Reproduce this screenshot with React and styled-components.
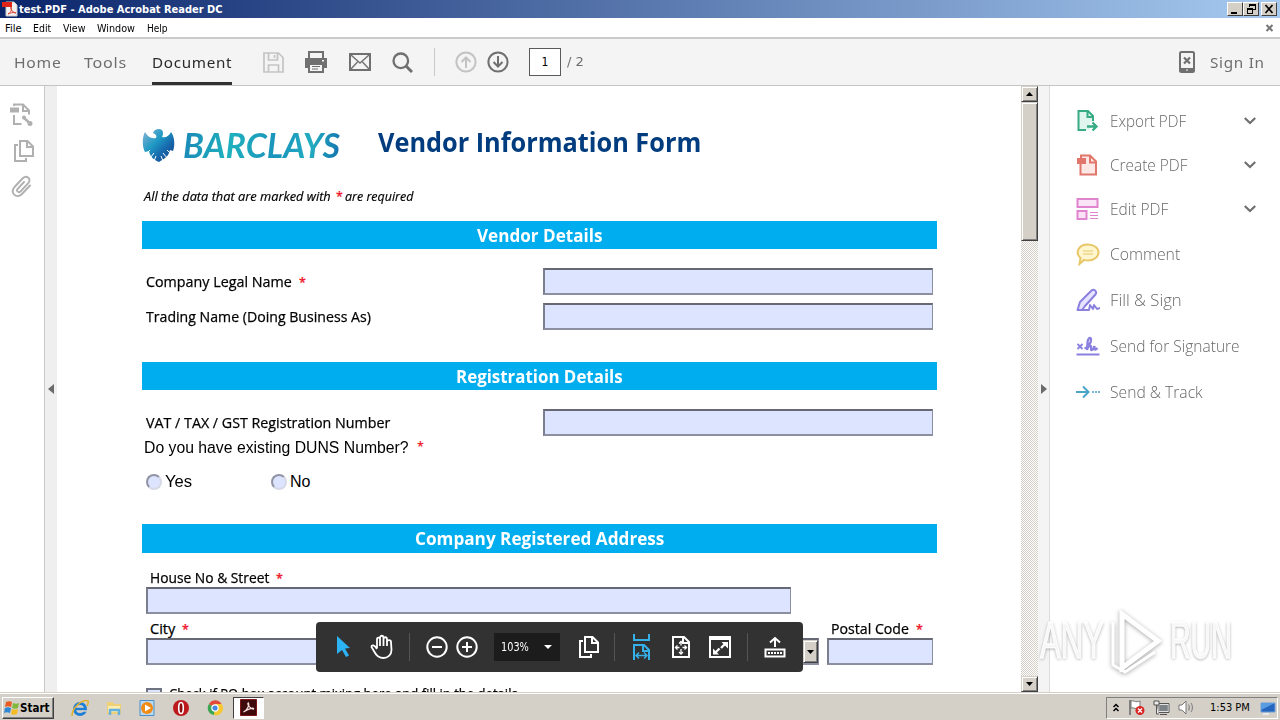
import React, { useLayoutEffect, useRef, useState } from 'react';
import styled, { createGlobalStyle, css } from 'styled-components';

const GlobalStyle = createGlobalStyle`
  * {
    box-sizing: border-box;
  }

  body {
    margin: 0;
    background: #fff;
    overflow: hidden;
  }
`;

const systemFont = '"DejaVu Sans Condensed", "DejaVu Sans", sans-serif';
const toolFont = '"Noto Sans", "Open Sans", sans-serif';
const pageFont = '"Open Sans", "Noto Sans", sans-serif';
const arial = '"Liberation Sans", Arial, sans-serif';

/* ---------- text set to a fixed measure ---------- */

const Measure = styled.span`
  display: inline-block;
  flex: none;
  width: ${props => props.$width}px;
  white-space: nowrap;
`;

const Glyphs = styled.span`
  display: inline-block;
  transform-origin: 0 50%;
`;

const Fit = ({ width, children }) => {
  const ref = useRef(null);
  const [scale, setScale] = useState(1);

  useLayoutEffect(() => {
    setScale(width / ref.current.offsetWidth);
  }, [width, children]);

  return (
    <Measure $width={width}>
      <Glyphs ref={ref} style={{ transform: `scaleX(${scale})` }}>{children}</Glyphs>
    </Measure>
  );
};

/* ---------- window chrome ---------- */

const Window = styled.div`
  position: relative;
  display: flex;
  flex-direction: column;
  width: 1280px;
  height: 720px;
  overflow: hidden;
  background: #fff;
`;

const TitleBar = styled.header`
  display: flex;
  align-items: center;
  flex: none;
  height: 18px;
  padding: 0 3px 0 2px;
  background: linear-gradient(90deg, #0a246a, #a6caf0);
  color: #fff;
  font: bold 11px/16px ${systemFont};
`;

const WindowTitle = styled.div`
  flex: 1;
  padding: 1px 0 0 1px;
`;

const WindowButton = styled.button`
  display: flex;
  width: 16px;
  height: 14px;
  margin-left: ${props => props.$gap || 0}px;
  padding: 0;
  border: 1px solid;
  border-color: #fff #404040 #404040 #fff;
  background: #d4d0c8;
`;

const MenuBar = styled.nav`
  display: flex;
  align-items: center;
  flex: none;
  height: 21px;
  padding: 2px 6px 0 5px;
  border-bottom: 2px solid #cbcbcb;
  background: #fff;
  color: #000;
  font: 11px/16px ${systemFont};
`;

const MenuItem = styled.span`
  margin-right: ${props => props.$gap}px;
`;

const MenuClose = styled.span`
  display: flex;
  margin: -2px 0 0 auto;
`;

const Toolbar = styled.div`
  display: flex;
  flex: none;
  height: 47px;
  padding-left: 14px;
  border-bottom: 1px solid #c4c4c4;
  background: #f4f4f4;
`;

const Tab = styled.div`
  display: flex;
  align-items: center;
  height: 46px;
  margin-right: ${props => props.$gap}px;
  padding-top: ${props => (props.$active ? 3 : 0)}px;
  border-bottom: ${props => (props.$active ? '3px solid #323232' : '0')};
  color: ${props => (props.$active ? '#2a2a2a' : '#6e6e6e')};
  font: 15px/24px ${toolFont};
  letter-spacing: 0.7px;
`;

const ToolSlot = styled.div`
  display: flex;
  align-items: center;
  height: 46px;
  margin-right: ${props => props.$gap}px;
`;

const ToolDivider = styled.div`
  width: 1px;
  height: 28px;
  background: #cacaca;
`;

const PageBox = styled.div`
  width: 32px;
  height: 28px;
  border: 1px solid #5a5a5a;
  background: #fff;
  color: #000;
  font: 12px/26px ${systemFont};
  text-align: center;
`;

const PageTotal = styled.span`
  color: #6e6e6e;
  font: 12px/24px ${systemFont};
`;

const SignIn = styled.div`
  display: flex;
  align-items: center;
  gap: 15px;
  height: 46px;
  margin-left: auto;
  padding-right: 15px;
  color: #6e6e6e;
  font: 15px/24px ${toolFont};
  letter-spacing: 0.7px;
`;

/* ---------- body columns ---------- */

const Body = styled.div`
  display: flex;
  flex: none;
  height: 606px;
`;

const Rail = styled.aside`
  width: 45px;
  padding: 16px 0 0 10px;
  border-right: 1px solid #c8c8c8;

  svg {
    display: block;
  }
`;

const RailIcon = styled.div`
  height: ${props => props.$height}px;
`;

const Gutter = styled.div`
  display: flex;
  align-items: center;
  justify-content: center;
  width: ${props => props.$width}px;
  background: ${props => props.$tone};
`;

const ScrollBar = styled.div`
  display: flex;
  flex-direction: column;
  width: 17px;
  height: 606px;
  background: repeating-conic-gradient(#d4d0c8 0 25%, #fff 0 50%) 0 0 / 2px 2px;
`;

const raised = css`
  border: 1px solid;
  border-color: #d4d0c8 #404040 #404040 #d4d0c8;
  box-shadow: inset 1px 1px 0 #fff, inset -1px -1px 0 #808080;
  background: #d4d0c8;
`;

const ScrollArrow = styled.div`
  ${raised}
  display: flex;
  align-items: center;
  justify-content: center;
  height: 16px;
`;

const ScrollThumb = styled.div`
  ${raised}
  height: 139px;
  margin-bottom: auto;
`;

/* ---------- document page ---------- */

const Page = styled.main`
  width: 964px;
  height: 606px;
  padding: 0 84px 0 85px;
  overflow: hidden;
  background: #fff;
  color: #000;
  font: 14.5px/20px ${pageFont};
`;

const PageHead = styled.div`
  height: 135px;
  padding-top: 41px;
`;

const Brand = styled.div`
  display: flex;
  align-items: center;
  height: 38px;
`;

const BrandName = styled.div`
  margin: -2px 38px 0 8px;
  font: italic 700 34px/38px Lato, sans-serif;

  ${Glyphs} {
    background: linear-gradient(100deg, #1a86b8, #1fb0bd 30%, #1a93bd 60%, #22adc0 80%, #1470ae);
    background-clip: text;
    -webkit-background-clip: text;
    color: transparent;
  }
`;

const PageTitle = styled.h1`
  margin: -8px 0 0;
  color: #003c7e;
  font: bold 26px/36px ${pageFont};
`;

const Note = styled.div`
  display: flex;
  padding: 21px 0 0 2px;
  font: italic 13px/20px ${pageFont};
  -webkit-text-stroke: 0.2px;
`;

const Star = styled.span`
  width: 6px;
  margin: 0 ${props => props.$after || 0}px 0 ${props => props.$before || 7}px;
  color: #ed1c2e;
  font: 600 12.5px/21px ${pageFont};
`;

const SectionBar = styled.h2`
  height: ${props => props.$height || 28}px;
  margin: 0;
  background: #00aeef;
  color: #fff;
  font: bold 17.5px/28px ${pageFont};
  text-align: center;
`;

const Section = styled.section`
  height: ${props => props.$height}px;
  padding: ${props => props.$top}px 4px 0;
`;

const FormRow = styled.div`
  display: flex;
  align-items: center;
  justify-content: space-between;
  height: 27px;
  margin-bottom: ${props => props.$below || 0}px;
`;

const Label = styled.label`
  display: flex;
  height: 20px;
  -webkit-text-stroke: 0.25px;
`;

const Field = styled.div`
  flex: none;
  width: ${props => props.$width}px;
  height: 27px;
  border: 2px solid;
  border-color: #666874 #8b8f9f #8b8f9f #7b7e8c;
  border-right-width: 1px;
  background: #dde4ff;
`;

const Question = styled.div`
  display: flex;
  height: 24px;
  margin-left: -2px;
  font: 16px/23px ${arial};
`;

const RadioRow = styled.div`
  display: flex;
  align-items: center;
  height: 24px;
  margin-top: 10px;
  font: 16px/24px ${arial};
`;

const Radio = styled.span`
  width: 16px;
  height: 16px;
  margin: 0 3px 0 ${props => props.$before || 0}px;
  border: 2px solid;
  border-color: #9194a4 #d6d9e6 #d6d9e6 #9194a4;
  border-radius: 50%;
  background: #dde4ff;
`;

const LabelLine = styled.div`
  display: flex;
  height: ${props => props.$height}px;
  padding: 1px 0 0 4px;
`;

const CityLabels = styled.div`
  display: flex;
  justify-content: space-between;
  width: 772px;
  padding-top: 4px;
`;

const FieldLine = styled.div`
  display: flex;
  gap: 8px;
`;

const SelectField = styled(Field)`
  display: flex;
  justify-content: flex-end;
`;

const SelectArrow = styled.div`
  ${raised}
  display: flex;
  align-items: center;
  justify-content: center;
  width: 15px;
`;

const CheckLine = styled.div`
  display: flex;
  gap: 7px;
  padding-top: 23px;
  -webkit-text-stroke: 0.25px;
`;

const CheckBox = styled.span`
  width: 16px;
  height: 16px;
  border: 2px solid #6f7280;
  background: #dde4ff;
`;

const CheckText = styled.span`
  margin-top: -4px;
`;

/* ---------- tools pane ---------- */

const Pane = styled.aside`
  width: 231px;
  padding: 13px 24px 0 26px;
  border-left: 1px solid #dcdcdc;
  background: #fff;
  color: #686868;
  font: 300 16px/24px "Open Sans", "Noto Sans", sans-serif;
`;

const PaneItem = styled.div`
  display: flex;
  align-items: center;
  height: ${props => props.$height}px;

  > svg:first-child {
    margin-right: 10px;
  }

  > svg:last-child {
    margin-left: auto;
  }
`;

/* ---------- floating page controls ---------- */

const Controls = styled.div`
  position: absolute;
  left: 316px;
  top: 622px;
  display: flex;
  align-items: center;
  width: 487px;
  height: 50px;
  padding-left: 18px;
  border-radius: 4px;
  background: #323232;
`;

const ControlIcon = styled.div`
  display: flex;
  flex: none;
  margin-right: ${props => props.$after}px;
`;

const ControlDivider = styled.div`
  width: 1px;
  height: 28px;
  margin-right: ${props => props.$after}px;
  background: #555;
`;

const ZoomBox = styled.div`
  display: flex;
  align-items: center;
  justify-content: space-between;
  width: 66px;
  height: 28px;
  margin-right: 18px;
  padding: 0 8px 0 7px;
  background: #1c1c1c;
  color: #fff;
  font: 12px/26px ${systemFont};
`;

/* ---------- watermark ---------- */

const Watermark = styled.div`
  position: absolute;
  left: 1040px;
  top: 606px;
  display: flex;
  align-items: center;
  height: 70px;
  color: rgba(255, 255, 255, 0.9);
  font: 51px/70px ${arial};
  -webkit-text-stroke: 1.5px rgba(255, 255, 255, 0.9);
  text-shadow: 0 1px 4px rgba(0, 0, 0, 0.45);

  svg {
    margin: 0 4px 0 0;
    filter: drop-shadow(0 1px 2px rgba(0, 0, 0, 0.35));
  }
`;

/* ---------- taskbar ---------- */

const Taskbar = styled.footer`
  display: flex;
  align-items: center;
  flex: none;
  height: 28px;
  padding: 2px 2px 0;
  border-top: 1px solid #d4d0c8;
  box-shadow: inset 0 1px 0 #fff;
  background: #d4d0c8;
  color: #000;
  font: 11px/20px ${systemFont};
`;

const StartButton = styled.button`
  display: flex;
  align-items: center;
  gap: 1px;
  width: 52px;
  height: 22px;
  margin-right: 17px;
  padding: 0;
  border: 1px solid;
  border-color: #fff #404040 #404040 #fff;
  box-shadow: inset -1px -1px 0 #808080;
  background: #d4d0c8;
  font: bold 11.5px/18px ${systemFont};
`;

const TaskIcon = styled.div`
  display: flex;
  width: 18px;
  margin-right: ${props => props.$gap}px;
`;

const ActiveTask = styled.div`
  display: flex;
  align-items: center;
  justify-content: center;
  width: 31px;
  height: 22px;
  border: 1px solid;
  border-color: #404040 #fff #fff #404040;
  background: #fff;
`;

const Tray = styled.div`
  display: flex;
  align-items: center;
  width: 172px;
  height: 22px;
  margin-left: auto;
  padding-left: 6px;
  border: 1px solid;
  border-color: #808080 #fff #fff #808080;

  > svg {
    flex: none;
    margin-right: 8px;
  }
`;

const Clock = styled.span`
  margin: 0 10px 0 7px;
`;

/* ---------- drawings ---------- */

const Svg = ({ w, h, children, color = 'none', width = 2, ...rest }) => (
  <svg
    width={w}
    height={h}
    viewBox={`0 0 ${w} ${h}`}
    fill="none"
    stroke={color}
    strokeWidth={width}
    {...rest}
  >
    {children}
  </svg>
);

const PdfFileIcon = () => (
  <Svg w={16} h={16}>
    <path d="M4 1h8l3 3v11H4z" fill="#f2f2f2" stroke="#c9c9c9" strokeWidth="1" />
    <path d="M0 1h10v5H0z" fill="#e02417" />
    <path d="M6 13c4-2 4-6 3-7-1 3 2 5 5 6-3-1-6 0-8 1z" stroke="#d8402f" strokeWidth="1" />
  </Svg>
);

const MinimizeIcon = () => (
  <Svg w={14} h={12}><path d="M3 9h6v2H3z" fill="#000" /></Svg>
);

const RestoreIcon = () => (
  <Svg w={14} h={12} color="#000" width={1} shapeRendering="crispEdges">
    <path d="M5.500 4V1.500h6v5H9M5 2.500h6M3.500 5.500h5v5h-5zM3 6.500h6" />
  </Svg>
);

const CloseIcon = () => (
  <Svg w={14} h={12} color="#000" width={1.700}><path d="M3.500 2l7 8M10.500 2l-7 8" /></Svg>
);

const SaveIcon = () => (
  <Svg w={21} h={21} color="#c3c3c3" width={1.700}>
    <path d="M1 1h14.500L20 5.500V20H1zM5.500 1v7h9V1M5.500 20v-7h10v7" />
    <path d="M11.500 3v3" />
  </Svg>
);

const PrintIcon = () => (
  <Svg w={22} h={22}>
    <path d="M0 7h22v10h-3.500v-4h-15v4H0z" fill="#707070" />
    <path d="M4 7V1h14v6M4 13v8h14v-8z" stroke="#707070" strokeWidth="2" />
    <path d="M7 15.500h8M7 18h6" stroke="#707070" strokeWidth="1.200" />
    <path d="M17 9h2v1.500h-2z" fill="#f4f4f4" />
  </Svg>
);

const MailIcon = () => (
  <Svg w={22} h={18} color="#707070">
    <path d="M1 1h20v16H1z" />
    <path d="M2 2l9 8 9-8M2 16l6.500-7M20 16l-6.500-7" strokeWidth="1.400" />
  </Svg>
);

const SearchIcon = () => (
  <Svg w={21} h={21} color="#707070" width={2.300}>
    <circle cx="8.800" cy="8.800" r="7.300" />
    <path d="M14 14l6 6" strokeWidth="3" />
  </Svg>
);

const PageArrow = ({ down, color }) => (
  <Svg w={22} h={22} color={color} width={2}>
    <circle cx="11" cy="11" r="9.600" />
    <path d={down ? 'M11 5v10.500M6.500 11l4.500 4.500 4.500-4.500' : 'M11 17V6.500M6.500 11L11 6.500l4.500 4.500'} />
  </Svg>
);

const PhoneIcon = () => (
  <Svg w={16} h={22}>
    <rect x="1" y="1" width="14" height="20" rx="1.500" stroke="#707070" strokeWidth="2" />
    <path d="M1 17h14v4H1z" fill="#707070" />
    <path d="M5 6.500l6 6M11 6.500l-6 6" stroke="#707070" strokeWidth="2.200" />
    <path d="M7 19h2" stroke="#f4f4f4" strokeWidth="1" />
  </Svg>
);

const RailExportIcon = () => (
  <Svg w={24} h={24} color="#b0b0b0">
    <path d="M4 4V2.500h9l6 6v4M13 3v6h6M4 13v9h7.500" />
    <path d="M0 5.500h9v5H0z" fill="#b0b0b0" stroke="none" />
    <path d="M13 15l6.500 6" strokeWidth="2.500" />
    <circle cx="14" cy="15.500" r="2" fill="#b0b0b0" stroke="none" />
    <circle cx="20" cy="21.500" r="1.500" fill="#b0b0b0" />
  </Svg>
);

const CopyIcon = ({ color }) => (
  <Svg w={21} h={24} color={color}>
    <path d="M7 2h7.500L20 7.500V17H7zM14 2v6h6M5 6H2v16h11v-3" />
  </Svg>
);

const ClipIcon = () => (
  <Svg w={22} h={24} color="#b0b0b0" width={1.900} strokeLinecap="round">
    <path d="M14 7l-6.500 7c-1.500 2 1 4.200 3 2.500l7.500-8c4-5-1.500-8.500-5-5.500L4.500 12c-5 6 2 12 7 7.500l8.500-9" />
  </Svg>
);

const SideArrow = ({ right }) => (
  <Svg w={6} h={10}><path d={right ? 'M0 0l6 5-6 5z' : 'M6 0L0 5l6 5z'} fill="#6b6b6b" /></Svg>
);

const Caret = ({ up, color = '#000', size = 7 }) => (
  <svg width={size} height="4" viewBox="0 0 7 4" preserveAspectRatio="none">
    <path d={up ? 'M0 4l3.500-4L7 4z' : 'M0 0h7L3.500 4z'} fill={color} />
  </svg>
);

const Chevron = () => (
  <Svg w={12} h={8} color="#707070" width={2.200}><path d="M0.800 1l5.200 5 5.200-5" /></Svg>
);

const ExportPdfIcon = () => (
  <Svg w={24} h={24} color="#36ab84">
    <path d="M3 2h9l6 6v5h-4v8H3z" fill="#dff5ed" stroke="none" />
    <path d="M10 21H2.500V2H12l5 5v5M11.500 2v6h6" />
    <path d="M11 17.500h9M16.500 13.500l4 4-4 4" strokeWidth="2.300" />
  </Svg>
);

const CreatePdfIcon = () => (
  <Svg w={24} h={24} color="#e0766c">
    <path d="M5 5V2.500h9l6 6v13H4.500V11" fill="#fde8e5" />
    <path d="M14 3v6.500h6" />
    <path d="M1 5h9v6H1z" fill="#e0766c" stroke="none" />
  </Svg>
);

const EditPdfIcon = () => (
  <Svg w={24} h={24} color="#e084cf">
    <path d="M1.500 2h20v8h-20zM1.500 14h9v8h-9z" fill="#fbe3f7" />
    <path d="M14 15.500h8M14 18.500h8M14 21.500h8" strokeWidth="1" />
  </Svg>
);

const CommentIcon = () => (
  <Svg w={24} h={24} color="#e8c768">
    <path d="M12 2.500c6 0 10.500 3.500 10.500 8s-5 8-10.500 8c-1.500 0-2.500-.200-4-.600L3.500 22l1-6C-1 11 2 2.500 12 2.500z" fill="#fff5cf" />
    <path d="M7 9h10M7 12h10" strokeWidth="1" />
  </Svg>
);

const FillSignIcon = () => (
  <Svg w={24} h={24} color="#8a80e0" strokeLinejoin="round">
    <path d="M1.500 22l2.500-8L15.500 2.500c2.500-2 6 1 4 4L9 18l-3 4z" fill="#e6e3ff" />
    <path d="M2 22h11l1-5 3 4 1-4 3 4 3-1" />
  </Svg>
);

const SignatureIcon = () => (
  <Svg w={24} h={24} color="#8a80e0">
    <path d="M0.500 20.500h23" />
    <path d="M1.500 10l5 5M6.500 10l-5 5" strokeWidth="1.800" />
    <path d="M8.500 14.500c4-1 7-7 6.500-9.500-1-2.500-3.500 0-3.500 4l-.5 7c1-4 3.500-5.500 4-3.500s-.500 3.500.500 3.500 2.500-2 3-4c0 3 0 5 3 2" strokeWidth="2.300" />
  </Svg>
);

const TrackIcon = () => (
  <Svg w={24} h={24} color="#4ba3c7">
    <path d="M0 12h12.500M7 6.500l5.500 5.500L7 17.500" />
    <path d="M16 12h8" strokeWidth="1.500" strokeDasharray="2 1" />
  </Svg>
);

/* spread eagle, shaded light to dark */
const EagleIcon = () => (
  <Svg w={33} h={36}>
    <defs>
      <linearGradient id="eagle" x1="0" y1="0" x2="1" y2="1">
        <stop offset="0" stopColor="#8fb4d6" />
        <stop offset="0.400" stopColor="#1f9ac4" />
        <stop offset="0.650" stopColor="#1769ad" />
        <stop offset="1" stopColor="#123e86" />
      </linearGradient>
    </defs>
    <path
      d="M3 4c3 5 6 7 11 6 1-2 0-4-3-5 1-3 3-4 6-4 4 0 5 4 3 8 4 1 7-1 9-5 4 5 4 14 2 19l-3-1c-1 6-6 9-11 12-5-2-9-5-10-11l-4 1C0 19 0 9 3 4z"
      fill="url(#eagle)"
    />
    <path d="M5 25l3-3M8 30l4-5M12 33l2-5M28 25l-3-3M25 30l-4-5M21 33l-2-5" stroke="#fff" strokeWidth="1" />
  </Svg>
);

const PointerIcon = () => (
  <Svg w={22} h={22}><path d="M3 0l13 12-5 .500 4 7-3 1.500-4-7-5 4z" fill="#2bb3f3" /></Svg>
);

const HandIcon = () => (
  <Svg w={24} h={26} color="#fff" width={1.800} strokeLinejoin="round">
    <path d="M7 14V5.500c0-2.500 3-2.500 3 0V4c0-3 3.500-3 3.500 0v1.500c0-3 3.500-3 3.500 0V8c0-2.500 4-2.500 4 0l.500 8c0 5-4 8-8 8s-7-2-9-6L1.500 13c0-2.500 3-2.500 5.500 2M10 5v7M13.500 4v8M17 5v7" />
  </Svg>
);

const ZoomIcon = ({ plus }) => (
  <Svg w={22} h={22} color="#fff">
    <circle cx="11" cy="11" r="9.700" />
    <path d={plus ? 'M6 11h10M11 6v10' : 'M6 11h10'} />
  </Svg>
);

const FitWidthIcon = () => (
  <Svg w={20} h={26} color="#36b0e8">
    <path d="M2 0v6h15V0M2 26V11h10l5 5v10M11 11v6h6" />
    <path d="M4 21.500h11M7 18.500l-3 3 3 3M12 18.500l3 3-3 3" strokeWidth="1.500" />
  </Svg>
);

const FitPageIcon = () => (
  <Svg w={20} h={22} color="#fff">
    <path d="M2 1h11l5 5v15H2zM12 1v6h6" />
    <path d="M10 5.500v4M10 13v5M4.500 11.500h4M11.500 11.500h4" strokeWidth="1.300" />
    <path d="M8 7.500l2-2 2 2M8 16l2 2 2-2M6.500 9.500l-2 2 2 2M13.500 9.500l2 2-2 2" strokeWidth="1.300" />
  </Svg>
);

const FullScreenIcon = () => (
  <Svg w={24} h={22} color="#fff">
    <path d="M2 1h20v20H2zM2 3h20" />
    <path d="M13.500 6H20V12.500zM11 18.500H5v-6z" fill="#fff" stroke="none" />
    <path d="M13 12l4-4M7 17l4.500-4.500" strokeWidth="2.300" />
  </Svg>
);

const DockIcon = () => (
  <Svg w={22} h={24} color="#fff">
    <path d="M11 12V3M6 7.500L11 3l5 4.500M1.500 14.500h19v7h-19z" />
    <path d="M4 18h15" strokeDasharray="2 1" />
  </Svg>
);

const WatermarkPlay = () => (
  <Svg w={62} h={68} color="#fff" width={5}>
    <path d="M18 7v54l36-27z" />
    <path d="M9 15v43l12 7 30-20" strokeWidth="3" />
  </Svg>
);

const FlagLogo = () => (
  <Svg w={16} h={16}>
    <path d="M3 2c2-1 4-1 6 0L8 7c-2-1-4-1-6 0z" fill="#ea5b23" />
    <path d="M10 3c2 1 4 1 6 0l-1 5c-2 1-4 1-6 0z" fill="#82b93c" />
    <path d="M2 8c2-1 4-1 6 0l-1 5c-2-1-4-1-6 0z" fill="#2f88d4" />
    <path d="M9 9c2 1 4 1 6 0l-1 5c-2 1-4 1-6 0z" fill="#f4bb23" />
  </Svg>
);

const BrowserIcon = () => (
  <Svg w={18} h={18}>
    <circle cx="9" cy="10" r="5.500" stroke="#1d7fd6" strokeWidth="3" />
    <path d="M5 10h10" stroke="#1d7fd6" strokeWidth="2.400" />
    <path d="M11 12h6" stroke="#d4d0c8" strokeWidth="1.500" />
    <path d="M1 17C1 8 12 0 17 2c1 1 0 3-1 5" stroke="#e3b12d" strokeWidth="1.500" />
  </Svg>
);

const FolderIcon = () => (
  <Svg w={18} h={18}>
    <path d="M2 3h6l1 2h7v10H2z" fill="#efd077" />
    <path d="M3 7h12v6H3z" fill="#fbeeb0" />
    <path d="M5 16v-5h9v5" stroke="#62b1df" strokeWidth="2.500" />
  </Svg>
);

const PlayerIcon = () => (
  <Svg w={18} h={18}>
    <path d="M2 1.500h14v15H2z" fill="#b9d9f1" stroke="#4a8fcb" strokeWidth="1" />
    <circle cx="9" cy="9" r="6" fill="#f28a16" />
    <path d="M7 5.500l6 3.500-6 3.500z" fill="#fff" />
  </Svg>
);

const OperaIcon = () => (
  <Svg w={18} h={18}>
    <circle cx="9" cy="9" r="8" fill="#bd1a1d" />
    <ellipse cx="9" cy="9" rx="2.300" ry="5.500" fill="#8b0d10" stroke="#fff" strokeWidth="1.600" />
  </Svg>
);

const ChromeIcon = () => (
  <Svg w={18} h={18}>
    <path d="M9 9L3 5a7 7 0 0 1 12.500 0z" fill="#e04a3a" />
    <path d="M9 9L3 5a7 7 0 0 0 5 11z" fill="#3da652" />
    <path d="M9 9L8 16a7 7 0 0 0 7.500-11H9z" fill="#f5c92f" />
    <circle cx="9" cy="9" r="3.200" fill="#4688e8" stroke="#fff" strokeWidth="1.200" />
  </Svg>
);

const AcrobatIcon = () => (
  <Svg w={17} h={17}>
    <path d="M0.500 0.500h16v16h-16z" fill="#3e0a0b" stroke="#7d1618" strokeWidth="1" />
    <path d="M3.500 13c4-2 6-7 5-9-2 0 1 6 5 6 1-2-6 0-10 3z" stroke="#f3dcdc" strokeWidth="1.300" />
  </Svg>
);

const UpChevrons = () => (
  <Svg w={7} h={10} color="#000" width={1.500}><path d="M.500 4l2.500-2.500L5.500 4M.500 8L3 5.500 5.500 8" /></Svg>
);

const FlagIcon = () => (
  <Svg w={17} h={17}>
    <path d="M2 1v15" stroke="#666" strokeWidth="1.500" />
    <path d="M3 2c3-1 4 2 9 0v7c-4 2-6-1-9 0z" fill="#fff" stroke="#777" strokeWidth="1" />
    <circle cx="12" cy="11.500" r="4.500" fill="#d92525" />
    <path d="M10 9.500l4 4M14 9.500l-4 4" stroke="#fff" strokeWidth="1.300" />
  </Svg>
);

const NetworkIcon = () => (
  <Svg w={17} h={17}>
    <path d="M5.500 5h10v8h-10z" fill="#7d8287" stroke="#fff" strokeWidth="1.300" />
    <path d="M5 4.500h11v9H5zM7 15.500h7" stroke="#555" strokeWidth="1" />
    <path d="M1 2h5v4H1zM3.500 6v9H6" fill="#eee" stroke="#555" strokeWidth="1" />
  </Svg>
);

const SpeakerIcon = () => (
  <Svg w={17} h={17}>
    <path d="M1 6h3l4-4v13l-4-4H1z" fill="#fff" stroke="#777" strokeWidth="1" />
    <path d="M10.500 5.500q2 3 0 6M13 4q3 4.500 0 9" stroke="#888" strokeWidth="1.100" />
  </Svg>
);

const DesktopIcon = () => (
  <Svg w={16} h={14}>
    <path d="M1 2h14v9H1z" fill="#2465bd" stroke="#719fd7" strokeWidth="1" />
    <path d="M1 2h14L1 9z" fill="#5a9ce2" />
    <path d="M3 13h6" stroke="#f2f2f2" strokeWidth="1.500" />
  </Svg>
);

/* ---------- data ---------- */

const menus = [
  { title: 'File', width: 16, gap: 12 },
  { title: 'Edit', width: 18, gap: 12 },
  { title: 'View', width: 22, gap: 12 },
  { title: 'Window', width: 38, gap: 12 },
  { title: 'Help', width: 21, gap: 0 },
];

const paneItems = [
  { title: 'Export PDF', width: 76, height: 44, icon: <ExportPdfIcon />, open: true },
  { title: 'Create PDF', width: 77, height: 44, icon: <CreatePdfIcon />, open: true },
  { title: 'Edit PDF', width: 58, height: 44, icon: <EditPdfIcon />, open: true },
  { title: 'Comment', width: 70, height: 46, icon: <CommentIcon /> },
  { title: 'Fill & Sign', width: 72, height: 46, icon: <FillSignIcon /> },
  { title: 'Send for Signature', width: 130, height: 46, icon: <SignatureIcon /> },
  { title: 'Send & Track', width: 93, height: 46, icon: <TrackIcon /> },
];

/* ---------- page parts ---------- */

const FormPage = () => (
  <Page>
    <PageHead>
      <Brand>
        <EagleIcon />
        <BrandName><Fit width={157}>BARCLAYS</Fit></BrandName>
        <PageTitle><Fit width={323}>Vendor Information Form</Fit></PageTitle>
      </Brand>
      <Note>
        <Fit width={187}>All the data that are marked with</Fit>
        <Star $before={5} $after={3}>*</Star>
        <Fit width={68}>are required</Fit>
      </Note>
    </PageHead>

    <SectionBar><Fit width={125}>Vendor Details</Fit></SectionBar>
    <Section $height={113} $top={19}>
      <FormRow $below={8}>
        <Label><Fit width={146}>Company Legal Name</Fit><Star>*</Star></Label>
        <Field $width={390} />
      </FormRow>
      <FormRow>
        <Label><Fit width={225}>Trading Name (Doing Business As)</Fit></Label>
        <Field $width={390} />
      </FormRow>
    </Section>

    <SectionBar><Fit width={167}>Registration Details</Fit></SectionBar>
    <Section $height={134} $top={19}>
      <FormRow>
        <Label><Fit width={244}>VAT / TAX / GST Registration Number</Fit></Label>
        <Field $width={390} />
      </FormRow>
      <Question>
        <Fit width={265}>Do you have existing DUNS Number?</Fit>
        <Star $before={8}>*</Star>
      </Question>
      <RadioRow>
        <Radio /><Fit width={27}>Yes</Fit>
        <Radio $before={79} /><Fit width={20}>No</Fit>
      </RadioRow>
    </Section>

    <SectionBar $height={29}><Fit width={249}>Company Registered Address</Fit></SectionBar>
    <Section $height={160} $top={14}>
      <LabelLine $height={20}>
        <Label><Fit width={119}>House No & Street</Fit><Star>*</Star></Label>
      </LabelLine>
      <Field $width={645} />
      <LabelLine $height={24}>
        <CityLabels>
          <Label><Fit width={25}>City</Fit><Star>*</Star></Label>
          <Label><Fit width={78}>Postal Code</Fit><Star>*</Star></Label>
        </CityLabels>
      </LabelLine>
      <FieldLine>
        <Field $width={340} />
        <SelectField $width={325}><SelectArrow><Caret /></SelectArrow></SelectField>
        <Field $width={106} />
      </FieldLine>
      <CheckLine>
        <CheckBox />
        <CheckText>
          <Fit width={349}>Check if PO box account mixing here and fill in the details</Fit>
        </CheckText>
      </CheckLine>
    </Section>
  </Page>
);

const App = () => (
  <Window>
    <GlobalStyle />
    <TitleBar>
      <PdfFileIcon />
      <WindowTitle><Fit width={204}>test.PDF - Adobe Acrobat Reader DC</Fit></WindowTitle>
      <WindowButton><MinimizeIcon /></WindowButton>
      <WindowButton><RestoreIcon /></WindowButton>
      <WindowButton $gap={2}><CloseIcon /></WindowButton>
    </TitleBar>
    <MenuBar>
      {menus.map(menu => (
        <MenuItem key={menu.title} $gap={menu.gap}>
          <Fit width={menu.width}>{menu.title}</Fit>
        </MenuItem>
      ))}
      <MenuClose>
        <Svg w={9} h={8} color="#777" width={2}><path d="M1.500 1l6 6M7.500 1l-6 6" /></Svg>
      </MenuClose>
    </MenuBar>
    <Toolbar>
      <Tab $gap={23}><Fit width={47}>Home</Fit></Tab>
      <Tab $gap={25}><Fit width={43}>Tools</Fit></Tab>
      <Tab $gap={31} $active><Fit width={80}>Document</Fit></Tab>
      <ToolSlot $gap={21}><SaveIcon /></ToolSlot>
      <ToolSlot $gap={22}><PrintIcon /></ToolSlot>
      <ToolSlot $gap={21}><MailIcon /></ToolSlot>
      <ToolSlot $gap={21}><SearchIcon /></ToolSlot>
      <ToolSlot $gap={20}><ToolDivider /></ToolSlot>
      <ToolSlot $gap={10}><PageArrow color="#c3c3c3" /></ToolSlot>
      <ToolSlot $gap={20}><PageArrow down color="#707070" /></ToolSlot>
      <ToolSlot $gap={6}><PageBox>1</PageBox></ToolSlot>
      <ToolSlot $gap={0}><PageTotal><Fit width={17}>/ 2</Fit></PageTotal></ToolSlot>
      <SignIn><PhoneIcon /><Fit width={55}>Sign In</Fit></SignIn>
    </Toolbar>

    <Body>
      <Rail>
        <RailIcon $height={37}><RailExportIcon /></RailIcon>
        <RailIcon $height={36}><Svg w={24} h={24}><g transform="translate(3 0)"><CopyIcon color="#b0b0b0" /></g></Svg></RailIcon>
        <RailIcon $height={24}><ClipIcon /></RailIcon>
      </Rail>
      <Gutter $width={12} $tone="#efefef"><SideArrow /></Gutter>
      <FormPage />
      <ScrollBar>
        <ScrollArrow><Caret up /></ScrollArrow>
        <ScrollThumb />
        <ScrollArrow><Caret /></ScrollArrow>
      </ScrollBar>
      <Gutter $width={11} $tone="#f4f4f4"><SideArrow right /></Gutter>
      <Pane>
        {paneItems.map(item => (
          <PaneItem key={item.title} $height={item.height}>
            {item.icon}
            <Fit width={item.width}>{item.title}</Fit>
            {item.open && <Chevron />}
          </PaneItem>
        ))}
      </Pane>
    </Body>

    <Taskbar>
      <StartButton><FlagLogo /><Fit width={29}>Start</Fit></StartButton>
      <TaskIcon $gap={16}><BrowserIcon /></TaskIcon>
      <TaskIcon $gap={15}><FolderIcon /></TaskIcon>
      <TaskIcon $gap={16}><PlayerIcon /></TaskIcon>
      <TaskIcon $gap={16}><OperaIcon /></TaskIcon>
      <TaskIcon $gap={9}><ChromeIcon /></TaskIcon>
      <ActiveTask><AcrobatIcon /></ActiveTask>
      <Tray>
        <UpChevrons />
        <FlagIcon />
        <NetworkIcon />
        <SpeakerIcon />
        <Clock><Fit width={40}>1:53 PM</Fit></Clock>
        <DesktopIcon />
      </Tray>
    </Taskbar>

    <Controls>
      <ControlIcon $after={14}><PointerIcon /></ControlIcon>
      <ControlIcon $after={15}><HandIcon /></ControlIcon>
      <ControlDivider $after={16} />
      <ControlIcon $after={8}><ZoomIcon /></ControlIcon>
      <ControlIcon $after={16}><ZoomIcon plus /></ControlIcon>
      <ZoomBox><Fit width={28}>103%</Fit><Caret color="#fff" size={8} /></ZoomBox>
      <ControlIcon $after={15}><CopyIcon color="#fff" /></ControlIcon>
      <ControlDivider $after={17} />
      <ControlIcon $after={19}><FitWidthIcon /></ControlIcon>
      <ControlIcon $after={17}><FitPageIcon /></ControlIcon>
      <ControlIcon $after={15}><FullScreenIcon /></ControlIcon>
      <ControlDivider $after={16} />
      <ControlIcon $after={0}><DockIcon /></ControlIcon>
    </Controls>

    <Watermark>
      <Fit width={64}>ANY</Fit>
      <WatermarkPlay />
      <Fit width={62}>RUN</Fit>
    </Watermark>
  </Window>
);

export default App;
